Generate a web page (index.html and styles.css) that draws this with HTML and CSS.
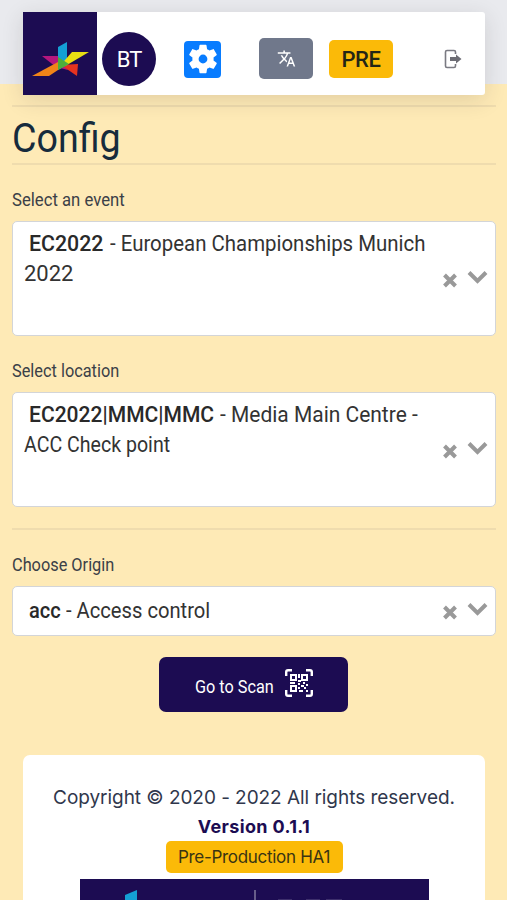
FILE: index.html
```html
<!DOCTYPE html>
<html lang="en">
<head>
<meta charset="utf-8">
<title>Config</title>
<link rel="stylesheet" href="styles.css">
</head>
<body>
<header class="navbar">
  <div class="brand">
    <svg width="60" height="40" viewBox="0 0 60 40">
      <path d="M10 14H26L36 28 24 25Z" fill="#b5177e"/>
      <path d="M29 23 46 22 45 34Z" fill="#e5331f"/>
      <path d="M26 5 35 0V23L26 28Z" fill="#149fd4"/>
      <path d="M0 34 26 20 35 22 17 34Z" fill="#f08418"/>
      <path d="M26 26 40 10H57L35 23Z" fill="#e8df13"/>
      <path d="M26 15 37 22 26 28Z" fill="#4cae3b"/>
    </svg>
  </div>
  <div class="avatar">BT</div>
  <div class="gear">
    <svg width="34" height="34" viewBox="0 0 24 24" fill="#fff"><path d="M19.43 12.98c.04-.32.07-.64.07-.98s-.03-.66-.07-.98l2.11-1.65c.19-.15.24-.42.12-.64l-2-3.46c-.12-.22-.39-.3-.61-.22l-2.49 1c-.52-.4-1.08-.73-1.69-.98l-.38-2.65C14.46 2.18 14.25 2 14 2h-4c-.25 0-.46.18-.49.42l-.38 2.65c-.61.25-1.17.59-1.69.98l-2.49-1c-.23-.09-.49 0-.61.22l-2 3.46c-.13.22-.07.49.12.64l2.11 1.65c-.04.32-.07.65-.07.98s.03.66.07.98l-2.11 1.65c-.19.15-.24.42-.12.64l2 3.46c.12.22.39.3.61.22l2.49-1c.52.4 1.08.73 1.69.98l.38 2.65c.03.24.24.42.49.42h4c.25 0 .46-.18.49-.42l.38-2.65c.61-.25 1.17-.59 1.69-.98l2.49 1c.23.09.49 0 .61-.22l2-3.46c.12-.22.07-.49-.12-.64zM12 15.100a3.100 3.100 0 1 1 0-6.200 3.100 3.100 0 0 1 0 6.200z"/></svg>
  </div>
  <div class="language">
    <svg width="19" height="19" viewBox="0 0 24 24" fill="#fff"><path d="M12.87 15.07l-2.54-2.51.03-.03A17.52 17.52 0 0 0 14.07 6H17V4h-7V2H8v2H1v2h11.17C11.5 7.92 10.44 9.75 9 11.35 8.07 10.32 7.3 9.19 6.69 8h-2c.73 1.63 1.73 3.17 2.98 4.56l-5.09 5.02L4 19l5-5 3.11 3.11zM18.5 10h-2L12 22h2l1.12-3h4.75L21 22h2zm-2.62 7l1.62-4.33L19.12 17z"/></svg>
  </div>
  <div class="env">PRE</div>
  <svg class="logout" width="18" height="20" viewBox="0 0 18 20"><path d="M11.500 5V3Q11.500 1.500 10 1.500H3Q1.500 1.500 1.500 3V17Q1.500 18.500 3 18.500H10Q11.500 18.500 11.500 17V15" fill="none" stroke="#7a7a82" stroke-width="1.600"/><path d="M6 8H12V5.500L17.500 10 12 14.500V12H6Z" fill="#6d6d75"/></svg>
</header>
<main class="content">
  <h1><span class="title">Config</span></h1>
  <label><span class="label-event">Select an event</span></label>
  <div class="select tall">
    <div class="value"><b>EC2022</b><span class="event-name">- European Championships Munich</span><br><span>2022</span></div>
    <svg class="controls" width="46" height="18" viewBox="0 0 46 18"><path d="M2.500 5 13.500 16M13.500 5 2.500 16"/><path d="M27 2.500 35.500 11 44 2.500"/></svg>
  </div>
  <label><span class="label-location">Select location</span></label>
  <div class="select tall second">
    <div class="value"><b class="location-code">EC2022|MMC|MMC</b><span class="location-name">- Media Main Centre -</span><br><span class="location-point">ACC Check point</span></div>
    <svg class="controls" width="46" height="18" viewBox="0 0 46 18"><path d="M2.500 5 13.500 16M13.500 5 2.500 16"/><path d="M27 2.500 35.500 11 44 2.500"/></svg>
  </div>
  <hr>
  <label><span class="label-origin">Choose Origin</span></label>
  <div class="select short">
    <div class="value"><b class="origin-code">acc</b><span class="origin-name">- Access control</span></div>
    <svg class="controls" width="46" height="18" viewBox="0 0 46 18"><path d="M2.500 5 13.500 16M13.500 5 2.500 16"/><path d="M27 2.500 35.500 11 44 2.500"/></svg>
  </div>
  <button class="scan"><span class="scan-text">Go to Scan</span>
    <svg width="28" height="28" viewBox="0 0 28 28" fill="none" stroke="#fff" stroke-width="2"><path stroke-width="2.400" d="M1.200 7V3Q1.200 1.200 3 1.200H7M21 1.200H25Q26.800 1.200 26.800 3V7M26.800 21V25Q26.800 26.800 25 26.800H21M7 26.800H3Q1.200 26.800 1.200 25V21"/><path d="M6 6H11V11H6ZM17 6H22V11H17ZM6 17H11V22H6Z"/><path d="M14 5V9M13 12H16M5 14H10M13 15H15M18 14H20M21 16H23M16 17H19M13 19H15M19 19H21M14 22H18M21 22H23"/></svg>
  </button>
</main>
<footer>
  <div class="copy">Copyright © 2020 - 2022 All rights reserved.</div>
  <div class="version">Version 0.1.1</div>
  <div class="badge">Pre-Production HA1</div>
  <div class="banner">
    <svg width="349" height="60" viewBox="0 0 349 60"><path d="M45 16 57 11V50L45 56Z" fill="#149fd4"/><path d="M175 11V60" stroke="#81789e" stroke-width="1.500"/><path d="M198 20.500h14M226 20.500h14M246 20.500h16" stroke="#3d2f6c"/></svg>
  </div>
</footer>
</body>
</html>
```
FILE: styles.css
```css
* { box-sizing: border-box; }
body { margin: 0; height: 900px; overflow: hidden; padding: 12px 11px 0 12px; background: linear-gradient(#e9eaee 84px, #feeab6 84px); font-family: Roboto, sans-serif; color: #333; }
span, b { display: inline-block; white-space: nowrap; transform-origin: 0 50%; }
.navbar { position: relative; display: flex; align-items: center; height: 83px; margin: 0 11px; background: #fff; border-radius: 3px; box-shadow: 0 5px 22px rgba(50,45,40,.14); }
.brand { flex: none; width: 74px; height: 83px; background: #1c0c52; padding: 30px 0 0 9px; }
.brand svg { display: block; }
.avatar { width: 54px; height: 54px; margin: 11px 0 0 5px; border-radius: 50%; background: #1c0c52; color: #fff; font-size: 22px; letter-spacing: -1px; line-height: 55px; text-align: center; }
.gear { width: 37px; height: 37px; margin: 11px 0 0 28px; background: #087cff; border-radius: 4px; display: grid; place-items: center; }
.language { width: 54px; height: 41px; margin: 10px 0 0 38px; border-radius: 5px; background: #70788b; display: grid; place-items: center; }
.env { width: 64px; height: 38px; margin: 11px 0 0 16px; border-radius: 5px; background: #fbba08; color: #242516; font-size: 22px; font-weight: 500; letter-spacing: -.4px; line-height: 39px; text-align: center; }
.logout { margin: 11px 0 0 51px; }
.content { padding-top: 10px; }
h1 { margin: 0 0 23px; height: 60px; border: solid #efdcae; border-width: 2px 0; color: #162b3c; font-size: 40px; font-weight: 400; line-height: 63px; }
.title { transform: scaleX(.94); }
label { display: block; height: 24px; margin-bottom: 9px; font-size: 18px; line-height: 24px; color: #3b4047; }
.label-event { transform: scaleX(.927); }
.label-location, .label-origin { transform: scaleX(.907); }
.select { display: flex; justify-content: space-between; border: 1.500px solid #d3d5d8; border-radius: 5px; background: #fff; font-size: 22px; line-height: 30px; padding: 7px 7px 0 11px; }
.value { flex: 1; min-width: 0; white-space: nowrap; }
.tall { height: 115px; margin-bottom: 23px; }
b { width: 75px; margin: 0 6px 0 5px; font-weight: 500; color: #292929; transform: scaleX(.97); }
.event-name { width: 320px; transform: scaleX(.928); }
.location-code { width: 185px; transform: scaleX(.957); }
.location-name { width: 200px; transform: scaleX(.953); }
.location-point { transform: scaleX(.89); }
.origin-code { width: 31px; transform: scaleX(.91); }
.origin-name { transform: scaleX(.917); }
.controls { flex: none; margin: 41px 0 0 -46px; fill: none; stroke: #999; stroke-width: 4; }
.second { margin-bottom: 21px; }
hr { margin: 0 0 23px; border: 0; height: 2px; background: #efdcae; }
.short { height: 50px; padding-top: 9px; }
.short .controls { margin-top: 6px; }
.scan { display: flex; width: 189px; height: 55px; margin: 21px 0 0 147px; padding: 0 0 0 36px; align-items: center; border: 0; border-radius: 7px; background: #1c0c52; color: #fff; font: 19px/30px Roboto, sans-serif; }
.scan svg { flex: none; margin: -4px 0 0 10px; }
.scan-text { width: 80px; margin-top: 4px; text-align: left; transform: scaleX(.855); }
footer { margin: 43px 11px 0; height: 160px; padding-top: 28px; border-radius: 7px 7px 0 0; background: #fff; text-align: center; font-family: Inter, sans-serif; }
.copy { font-size: 19px; line-height: 30px; letter-spacing: -.05px; color: #30374c; }
.version { font-size: 18px; font-weight: 700; line-height: 28px; letter-spacing: .35px; color: #1c0c52; }
.badge { width: 177px; height: 32px; margin: 0 auto 6px; border-radius: 5px; background: #fbba08; color: #393413; font-size: 17px; letter-spacing: -.3px; line-height: 32px; }
.banner { width: 349px; height: 60px; margin: 0 auto; background: #1c0c52; }
```
